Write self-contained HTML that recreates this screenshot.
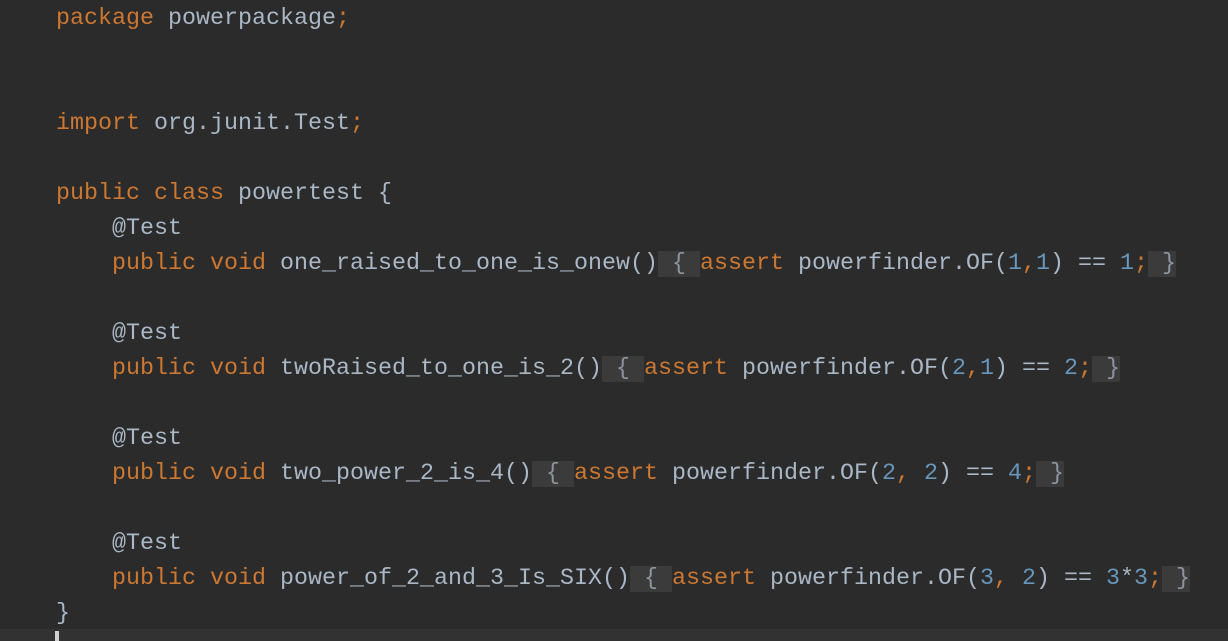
<!DOCTYPE html>
<html><head><meta charset="utf-8"><style>
html,body{margin:0;padding:0;}
body{width:1228px;height:641px;background:#2b2b2b;overflow:hidden;position:relative;}
pre{margin:0;position:absolute;left:56px;top:2px;font-family:"Liberation Mono",monospace;font-size:23.33px;line-height:35px;color:#a9b7c6;white-space:pre;}
.k{color:#cc7832}.n{color:#6897bb}
.f{background:#3b3b3b;color:#8c959e}
.band{position:absolute;left:0;top:629px;width:1228px;height:12px;background:#323232}
.cur{position:absolute;left:55px;top:631px;width:4px;height:10px;background:#d0d0d0}
</style></head><body>
<div class="band"></div><div class="cur"></div>
<pre><span class="k">package</span> powerpackage<span class="k">;</span>


<span class="k">import</span> org.junit.Test<span class="k">;</span>

<span class="k">public class</span> powertest {
    @Test
    <span class="k">public void</span> one_raised_to_one_is_onew()<span class="f"> { </span><span class="k">assert</span> powerfinder.OF(<span class="n">1</span><span class="k">,</span><span class="n">1</span>) == <span class="n">1</span><span class="k">;</span><span class="f"> }</span>

    @Test
    <span class="k">public void</span> twoRaised_to_one_is_2()<span class="f"> { </span><span class="k">assert</span> powerfinder.OF(<span class="n">2</span><span class="k">,</span><span class="n">1</span>) == <span class="n">2</span><span class="k">;</span><span class="f"> }</span>

    @Test
    <span class="k">public void</span> two_power_2_is_4()<span class="f"> { </span><span class="k">assert</span> powerfinder.OF(<span class="n">2</span><span class="k">,</span> <span class="n">2</span>) == <span class="n">4</span><span class="k">;</span><span class="f"> }</span>

    @Test
    <span class="k">public void</span> power_of_2_and_3_Is_SIX()<span class="f"> { </span><span class="k">assert</span> powerfinder.OF(<span class="n">3</span><span class="k">,</span> <span class="n">2</span>) == <span class="n">3</span>*<span class="n">3</span><span class="k">;</span><span class="f"> }</span>
}</pre>
</body></html>
